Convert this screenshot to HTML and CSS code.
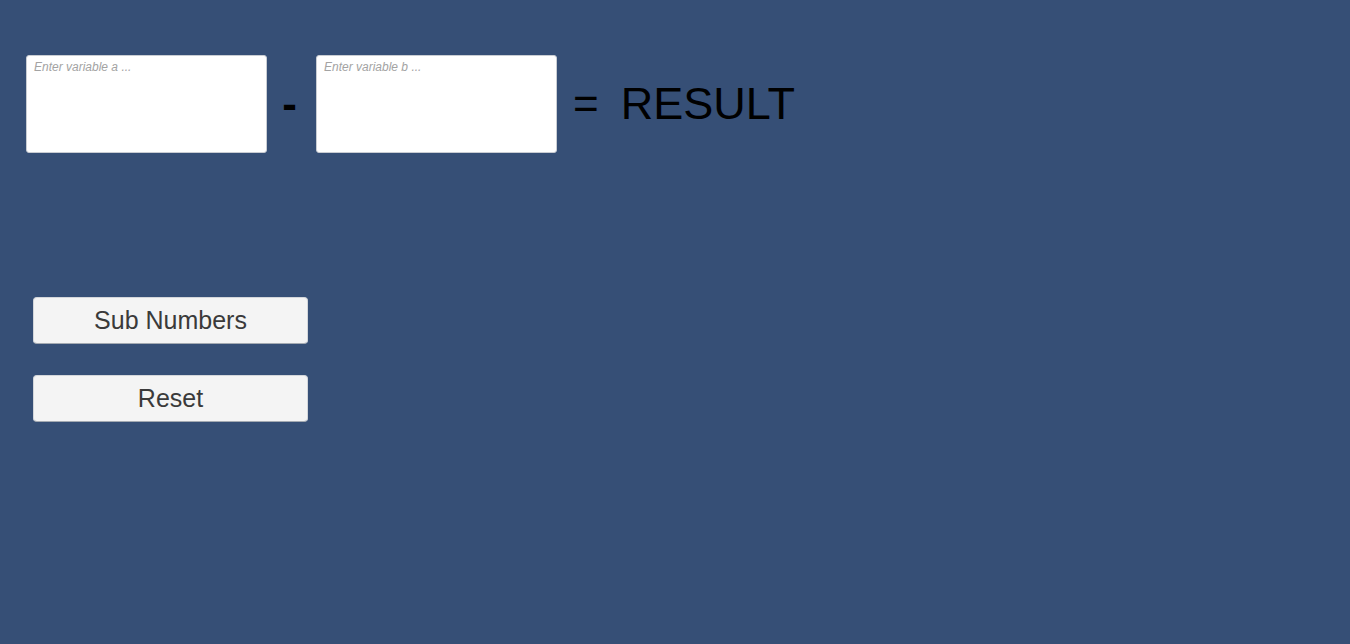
FILE: index.html
```html
<!DOCTYPE html>
<html>
<head>
<meta charset="utf-8">
<link rel="stylesheet" href="styles.css">
</head>
<body>
<div class="page">
  <div class="equation">
    <textarea class="field" placeholder="Enter variable a ..."></textarea>
    <span class="op minus">-</span>
    <textarea class="field" placeholder="Enter variable b ..."></textarea>
    <span class="op equals">=</span>
    <span class="op result">RESULT</span>
  </div>
  <div class="actions">
    <button class="btn">Sub Numbers</button>
    <button class="btn">Reset</button>
  </div>
</div>
</body>
</html>
```
FILE: styles.css
```css
html, body {
  margin: 0;
  padding: 0;
  background: #364f76;
  height: 100%;
  overflow: hidden;
}
.page {
  padding: 55px 0 0 26px;
  font-family: "Liberation Sans", Arial, sans-serif;
}
.equation {
  display: flex;
  align-items: center;
  height: 98px;
}
.field {
  box-sizing: border-box;
  width: 241px;
  height: 98px;
  margin: 0;
  padding: 4px 7px;
  background: #ffffff;
  border: 1px solid #c9cdd3;
  border-radius: 3px;
  resize: none;
  outline: none;
  font-family: "Liberation Sans", Arial, sans-serif;
  font-size: 12px;
  line-height: 14px;
  color: #333;
}
.field::placeholder {
  color: #a3a3a3;
  font-style: italic;
  opacity: 1;
}
.op {
  font-size: 44px;
  line-height: 44px;
  color: #000;
}
.minus {
  width: 45px;
  text-align: center;
  margin-right: 4px;
  font-weight: bold;
}
.equals {
  margin-left: 16px;
}
.result {
  margin-left: 22px;
  font-size: 45px;
}
.actions {
  margin: 144px 0 0 7px;
  display: flex;
  flex-direction: column;
  gap: 31px;
  align-items: flex-start;
}
.btn {
  box-sizing: border-box;
  width: 275px;
  height: 47px;
  margin: 0;
  padding: 0;
  background: #f4f4f4;
  border: 1px solid #d3d6da;
  border-bottom-color: #a4aab2;
  border-radius: 4px;
  font-family: "Liberation Sans", Arial, sans-serif;
  font-size: 25px;
  color: #3a3a3a;
  cursor: pointer;
}
```
